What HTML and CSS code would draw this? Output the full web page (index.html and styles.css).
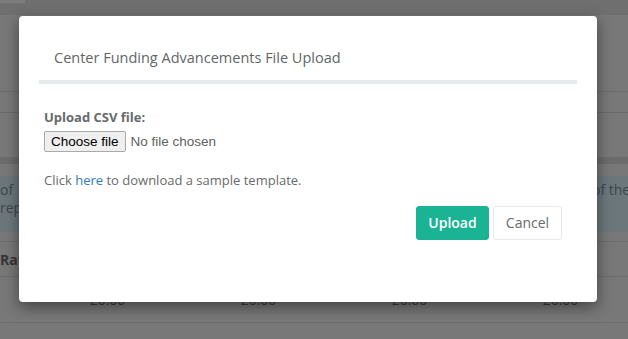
FILE: index.html
```html
<!DOCTYPE html>
<html lang="en">
<head>
<meta charset="utf-8">
<title>Center Funding Advancements File Upload</title>
<link rel="stylesheet" href="styles.css">
</head>
<body>
<div class="page">
  <div class="band topbar"><span class="topstub"></span></div>
  <div class="band b1"></div>
  <div class="band b2"></div>
  <div class="band b3"></div>
  <div class="band dark"></div>
  <div class="band spacer"></div>
  <div class="alert">
    <div class="alert-left">of<br>rep</div>
    <div class="alert-right">of the</div>
  </div>
  <div class="band gap"></div>
  <div class="thead">
    <span>Rate</span>
    <span>ECE</span>
  </div>
  <div class="trow">
    <span>20.00</span><span>20.00</span><span>20.00</span><span>20.00</span>
  </div>
  <div class="band rest"></div>
</div>

<div class="modal" role="dialog" aria-labelledby="modal-title">
  <div class="modal-header">
    <h4 id="modal-title" class="modal-title">Center Funding Advancements File Upload</h4>
  </div>
  <div class="modal-body">
    <label class="field-label" for="csv">Upload CSV file:</label>
    <div class="file-input">
      <span class="file-btn" id="csv">Choose file</span>
      <span class="file-name">No file chosen</span>
    </div>
    <p class="hint">Click <a href="#" class="link">here</a> to download a sample template.</p>
    <div class="actions">
      <button class="btn btn-primary" type="button">Upload</button>
      <button class="btn btn-white" type="button">Cancel</button>
    </div>
  </div>
</div>
</body>
</html>
```

FILE: styles.css
```css
* { box-sizing: border-box; }

html, body {
  margin: 0;
  padding: 0;
  width: 628px;
  height: 339px;
  overflow: hidden;
  background: #767676;
  font-family: "Open Sans", "Liberation Sans", sans-serif;
}

.page {
  display: flex;
  flex-direction: column;
  width: 628px;
  height: 339px;
  color: #3a3a3a;
}

.band { flex: none; }

.topbar {
  height: 15px;
  background: #6f6f6f;
}
.topstub {
  display: block;
  width: 25px;
  height: 3px;
  background: #7c7c7c;
}

.b1 {
  height: 77px;
  background: #787878;
  border-bottom: 1px solid #6d6d6d;
}
.b2 {
  height: 21px;
  background: #787878;
  border-bottom: 1px solid #6d6d6d;
}
.b3 {
  height: 44px;
  background: #787878;
}
.dark {
  height: 7px;
  background: #6c6c6c;
}
.spacer {
  height: 12px;
  background: #787878;
}

.alert {
  height: 56px;
  background: #6c777c;
  color: #3a474e;
  font-size: 14px;
  line-height: 18px;
  display: flex;
  justify-content: space-between;
  padding-top: 5px;
  white-space: nowrap;
}
.alert-right { width: 36px; }

.gap {
  height: 10px;
  background: #787878;
  border-bottom: 1px solid #6d6d6d;
}

.thead {
  height: 35px;
  background: #787878;
  border-bottom: 1px solid #6d6d6d;
  display: flex;
  justify-content: space-between;
  align-items: center;
  padding: 0 38px 0 0;
  font-weight: 700;
  font-size: 14px;
  color: #363636;
}

.trow {
  height: 46px;
  background: #787878;
  border-bottom: 1px solid #6d6d6d;
  display: grid;
  grid-template-columns: repeat(4, 151px);
  padding-left: 32px;
  align-items: center;
  font-size: 14px;
  color: #3c3c3c;
}
.trow span { text-align: center; }

.rest {
  flex: 1;
  background: #787878;
}

/* Modal (overlays the page) */
.modal {
  position: absolute;
  left: 19px;
  top: 16px;
  width: 578px;
  height: 286px;
  background: #fff;
  border-radius: 4px;
  box-shadow: 0 5px 15px rgba(0, 0, 0, 0.45);
  display: flex;
  flex-direction: column;
}

.modal-header {
  padding: 0 20px;
}
.modal-title {
  margin: 0;
  padding: 32px 15px 12px;
  font-size: 14.5px;
  line-height: 20px;
  font-weight: 400;
  color: #636668;
  border-bottom: 4px solid #e7eaec;
}

.modal-body {
  flex: 1;
  padding: 24px 35px 0 25px;
  display: flex;
  flex-direction: column;
  color: #676a6c;
  font-size: 13px;
}

.field-label {
  font-weight: 700;
  line-height: 18px;
  margin-bottom: 5px;
}

.file-input {
  display: flex;
  align-items: center;
  gap: 5px;
  font-family: "Liberation Sans", Arial, sans-serif;
  font-size: 13.5px;
}
.file-btn {
  height: 21px;
  padding: 0 6px;
  display: inline-flex;
  align-items: center;
  background: #efefef;
  border: 1px solid #a9a9a9;
  border-radius: 2px;
  color: #000;
}
.file-name {
  color: #5f5f5f;
}

.hint {
  margin: 19px 0 0;
  line-height: 18px;
}
.link {
  color: #337ab7;
  text-decoration: none;
}

.actions {
  margin-top: 17px;
  display: flex;
  justify-content: flex-end;
  gap: 4px;
}

.btn {
  height: 34px;
  border-radius: 3px;
  font-family: "Open Sans", "Liberation Sans", sans-serif;
  font-size: 14px;
  line-height: 20px;
  padding: 0 10px;
  cursor: pointer;
}
.btn-primary {
  width: 73px;
  background: #1ab394;
  border: 1px solid #1ab394;
  color: #fff;
  font-weight: 600;
}
.btn-white {
  width: 69px;
  background: #fff;
  border: 1px solid #e7eaec;
  color: #676a6c;
  font-weight: 400;
}
```
